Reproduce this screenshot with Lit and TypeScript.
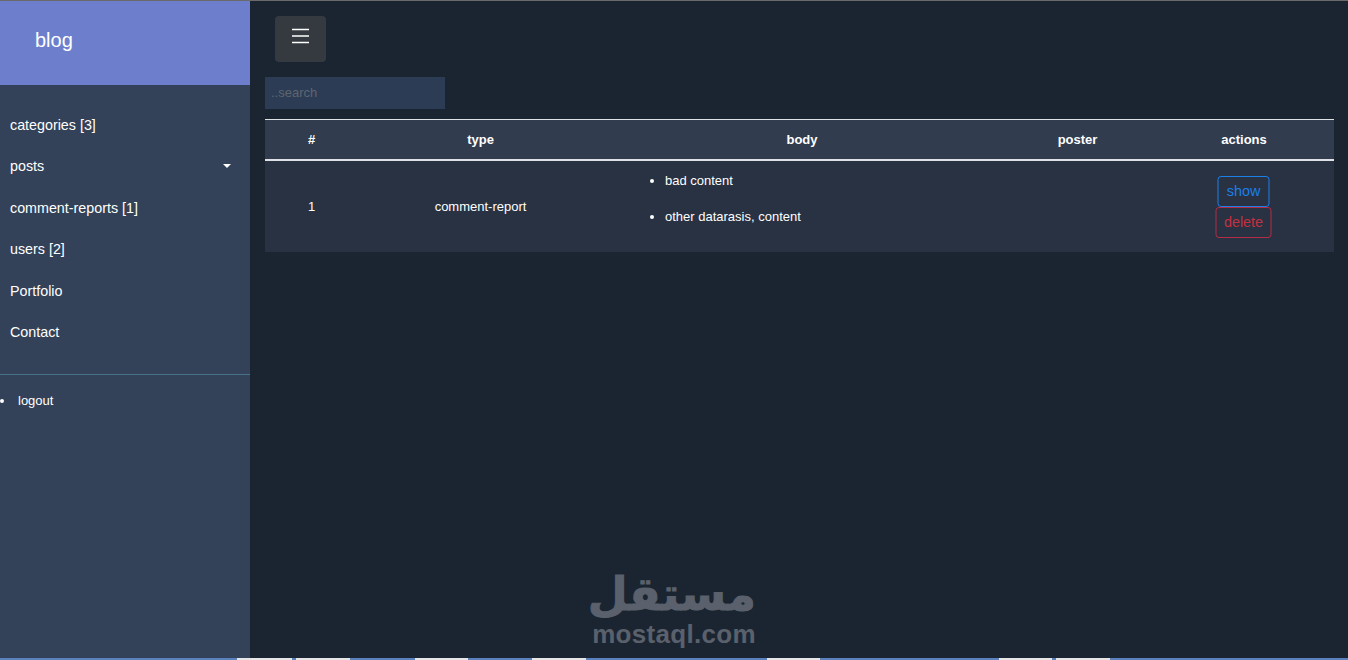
import { LitElement, html, css } from "lit";
import { customElement } from "lit/decorators.js";

const STRIP: [number, boolean][] = [
  [237, false], [55, true], [4, false], [54, true], [65, false], [53, true], [64, false], [54, true],
  [181, false], [53, true], [179, false], [53, true], [4, false], [54, true], [238, false],
];

@customElement("app-root")
export class AppRoot extends LitElement {
  static styles = css`
    :host { display: block; width: 1348px; height: 660px; overflow: hidden; position: relative; font-family: "Liberation Sans", Arial, sans-serif; color: #fff; background: #1b2532; }
    * { box-sizing: border-box; }
    .topline { height: 1px; background: #6a6a6a; }
    .strip { display: flex; height: 2px; background: #5b82bd; }
    .strip span { background: #5b82bd; }
    .strip .light { background: #e6e6e6; }
    .page { display: flex; height: 657px; }
    .side { width: 250px; flex: none; background: #334259; display: flex; flex-direction: column; }
    .brand { height: 84px; background: #6d7fcc; padding: 0 35px 6px; display: flex; align-items: center; font-size: 20px; font-weight: 400; }
    .nav { list-style: none; margin: 0; padding: 19px 0 21px; border-bottom: 1px solid #47748b; }
    .nav li { height: 41.5px; padding: 0 10px; display: flex; align-items: center; justify-content: space-between; font-size: 14.3px; }
    .caret { width: 0; height: 0; border: 4.5px solid transparent; border-top-color: #fff; border-bottom: 0; margin-right: 9px; }
    .sub { margin: 0; padding: 18px 0 0 18px; font-size: 13px; list-style: none; }
    .sub li { position: relative; }
    .sub li::before { content: ""; position: absolute; left: -18px; top: 6px; width: 4px; height: 4px; border-radius: 50%; background: #fff; }
    .main { flex: 1; padding: 15px 14px 0 15px; display: flex; flex-direction: column; align-items: flex-start; }
    .toggle { margin-left: 10px; width: 51px; height: 46px; background: #343a40; border: 0; border-radius: 4px; padding: 0 0 7px 17px; display: block; }
    .toggle svg { display: block; }
    .search { margin-top: 15px; width: 180px; height: 32px; background: #2d3c55; padding: 0 6px 2px; display: flex; align-items: center; color: #5d6670; font-size: 13px; }
    table { margin-top: 10px; width: 100%; border-collapse: collapse; table-layout: fixed; font-size: 13px; }
    th { height: 40px; background: #323c4f; border-top: 1px solid #dee2e6; border-bottom: 2px solid #dee2e6; font-size: 13px; font-weight: 700; text-align: center; padding: 0; }
    td { height: 92px; background: #283243; text-align: center; padding: 1px 0 0; vertical-align: middle; }
    td.body { text-align: left; padding-top: 3px; }
    .body ul { margin: 0; padding-left: 62px; }
    .body li { line-height: 18px; margin-bottom: 18px; }
    .btn { display: inline-block; font-size: 14.4px; line-height: 19px; background: transparent; border-radius: 3.5px; padding: 5px 8px; border: 1px solid; font-family: inherit; }
    .show { color: #1d7fe8; border-color: #1d7fe8; }
    .del { color: #c4303f; border-color: #b52d44; padding: 5px 7.5px; }
    .stack { display: flex; flex-direction: column; align-items: center; transform: translateX(-0.5px); }
    .mark { position: absolute; left: 592px; top: 566px; width: 164px; color: #5a616c; text-align: center; }
    .mark .ar { font-family: "DejaVu Sans", sans-serif; font-weight: 700; font-size: 46px; line-height: 56px; height: 56px; -webkit-text-stroke: 1px #5a616c; }
    .mark .en { font-weight: 700; font-size: 26px; line-height: 24px; letter-spacing: 0.3px; white-space: nowrap; }
  `;

  render() {
    return html`
      <div class="topline"></div>
      <div class="page">
        <aside class="side">
          <div class="brand">blog</div>
          <ul class="nav">
            <li>categories [3]</li>
            <li>posts<span class="caret"></span></li>
            <li>comment-reports [1]</li>
            <li>users [2]</li>
            <li>Portfolio</li>
            <li>Contact</li>
          </ul>
          <ul class="sub"><li>logout</li></ul>
        </aside>
        <main class="main">
          <button class="toggle" aria-label="menu">
            <svg width="17" height="16" viewBox="0 0 17 16" fill="none" stroke="#fff" stroke-width="1.5">
              <path d="M0 1.5H17M0 8H17M0 14.5H17" />
            </svg>
          </button>
          <div class="search">..search</div>
          <table>
            <colgroup>
              <col style="width:93px" /><col style="width:245px" /><col style="width:398px" /><col style="width:153px" /><col style="width:180px" />
            </colgroup>
            <thead><tr><th>#</th><th>type</th><th>body</th><th>poster</th><th>actions</th></tr></thead>
            <tbody>
              <tr>
                <td>1</td>
                <td>comment-report</td>
                <td class="body"><ul><li>bad content</li><li>other datarasis, content</li></ul></td>
                <td></td>
                <td><div class="stack"><span class="btn show">show</span><span class="btn del">delete</span></div></td>
              </tr>
            </tbody>
          </table>
        </main>
      </div>
      <div class="strip">${STRIP.map(([w, light]) => html`<span class=${light ? "light" : ""} style="width:${w}px"></span>`)}</div>
      <div class="mark"><div class="ar" dir="rtl" lang="ar">مستقل</div><div class="en">mostaql.com</div></div>
    `;
  }
}
